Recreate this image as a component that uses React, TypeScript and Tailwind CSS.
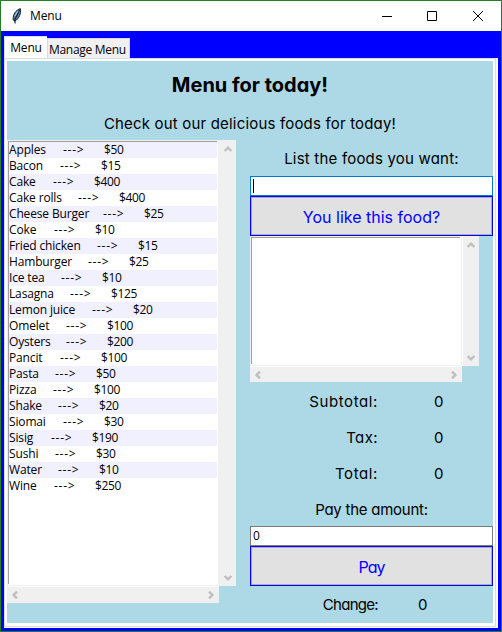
import React from "react";

const foods: [string, number, number][] = [
  ["Apples", 50, 104],
  ["Bacon", 15, 101],
  ["Cake", 400, 94],
  ["Cake rolls", 400, 119],
  ["Cheese Burger", 25, 144],
  ["Coke", 10, 95],
  ["Fried chicken", 15, 138],
  ["Hamburger", 25, 129],
  ["Ice tea", 10, 102],
  ["Lasagna", 125, 111],
  ["Lemon juice", 20, 133],
  ["Omelet", 100, 107],
  ["Oysters", 200, 107],
  ["Pancit", 100, 101],
  ["Pasta", 50, 96],
  ["Pizza", 100, 94],
  ["Shake", 20, 99],
  ["Siomai", 30, 104],
  ["Sisig", 190, 92],
  ["Sushi", 30, 96],
  ["Water", 10, 99],
  ["Wine", 250, 95],
];

const ui = "font-['Segoe_UI','Open_Sans',sans-serif]";
const comic =
  "font-['Comic_Sans_MS','Inter',sans-serif] [font-feature-settings:'cv11'] whitespace-nowrap";

function Chevron({ turn }: { turn: string }) {
  return (
    <svg className={`block shrink-0 ${turn}`} width="8" height="8" viewBox="0 0 8 8">
      <path d="M.6 6L4 2.6L7.4 6" fill="none" stroke="#bfbfbf" strokeWidth="2.4" />
    </svg>
  );
}

function ListFrame({ tall, children }: { tall: boolean; children?: React.ReactNode }) {
  return (
    <div className="w-[229px]">
      <div className={`flex ${tall ? "h-[446px]" : "h-[130px]"}`}>
        <div className="w-[212px] border border-[#f0f0f0] bg-white">
          <div className="mr-px h-[calc(100%-1px)] overflow-hidden border-t border-l border-[#a0a0a0]">
            {children}
          </div>
        </div>
        <div className={`w-px ${tall ? "bg-[#f0f0f0]" : "bg-white"}`} />
        <div className="flex w-4 flex-col items-center justify-between bg-[#f0f0f0] pt-[5px] pb-1">
          <Chevron turn="rotate-0" />
          <Chevron turn="rotate-180" />
        </div>
      </div>
      <div className="h-px w-[212px] bg-white" />
      <div className={`flex w-[212px] items-center justify-between bg-[#f0f0f0] px-1 ${tall ? "h-4" : "h-[15px]"}`}>
        <Chevron turn="-rotate-90" />
        <Chevron turn="rotate-90" />
      </div>
    </div>
  );
}

function Amount({ label, value, gap, track }: { label: string; value: string; gap: string; track: string }) {
  return (
    <div className={`flex h-9 items-center pt-[3px] text-[15px] ${comic}`}>
      <div className={`w-32 text-right ${track}`}>{label}</div>
      <div className={gap}>{value}</div>
    </div>
  );
}

export default function App() {
  return (
    <div className={`flex h-[632px] w-[502px] flex-col border border-[#228022] bg-[#0000ff] text-black ${ui}`}>
      <div className="flex h-[30px] shrink-0 items-center bg-white text-[12px]">
        <svg className="ml-[11px]" width="10" height="16" viewBox="0 0 10 16">
          <path d="M8.4.7C4 1.7.7 6.3 1.2 12L3 13C7.2 10.5 9.2 5.5 8.4.7Z" fill="#4f86bd" stroke="#18202b" />
          <path d="M7.5 2L2.7 12M3 12V15.5" fill="none" stroke="#111" strokeWidth="1.1" />
          <path d="M6 3L3 8" stroke="#b9d7ef" />
        </svg>
        <span className="ml-[8px] tracking-[-0.1px]">Menu</span>
        <svg className="mr-[18px] mb-px ml-auto" width="101" height="10" viewBox="0 0 101 10" fill="none" stroke="#000">
          <path d="M0 5.5H10M45.5.5H54.5V9.5H45.5ZM91 0L101 10M101 0L91 10" />
        </svg>
      </div>

      <div className="flex h-[27px] shrink-0 items-end pl-[3px] text-[12px]">
        <div className="flex h-[22px] w-[43px] items-center justify-center border-t border-l border-[#dcdcdc] bg-white tracking-[-0.15px]">
          Menu
        </div>
        <div className="flex h-5 w-[83px] items-center border border-b-0 border-[#d9d9d9] bg-[#f0f0f0] pt-[2px] pl-px tracking-[-0.3px] whitespace-nowrap">
          Manage Menu
        </div>
      </div>

      <div className="ml-[3px] h-[570px] w-[494px] shrink-0 bg-[#f9f9f9]">
        <div className="h-[569px] w-[492px] border border-[#dcdcdc] bg-white pt-[2px] pl-[2px]">
          <div className="flex h-[562px] w-[486px] flex-col bg-[#add8e6]">
            <h1 className={`flex h-[45px] items-center justify-center pt-[2px] text-[20px] font-bold ${comic}`}>
              Menu for today!
            </h1>
            <p className={`flex h-[34px] items-center justify-center pt-[2px] text-[15px] tracking-[0.18px] ${comic}`}>
              Check out our delicious foods for today!
            </p>
            <div className="flex">
              <ListFrame tall>
                {foods.map(([name, price, x], i) => (
                  <div
                    key={name}
                    className={`flex h-4 text-[12px] leading-4 whitespace-nowrap ${i % 2 ? "bg-white" : "bg-[#f0f0ff]"}`}
                  >
                    <span className="shrink-0 tracking-[-0.15px]" style={{ width: x - 50 }}>{name}</span>
                    <span className="w-[41px] shrink-0 tracking-[0.75px]">---&gt;</span>
                    <span className="tracking-[-0.4px]">${price}</span>
                  </div>
                ))}
              </ListFrame>
              <div className="ml-[14px] w-[243px]">
                <div className={`flex h-9 items-center justify-center pt-[3px] text-[15px] tracking-[0.2px] ${comic}`}>
                  List the foods you want:
                </div>
                <div className="flex h-5 items-center border border-[#0078d7] bg-white pl-[2px]">
                  <div className="h-[14px] w-px bg-black" />
                </div>
                <button className={`block h-10 w-full border border-[#0000ff] bg-[#e1e1e1] pt-[2px] text-[16px] text-[#0000ff] shadow-[inset_0_0_0_1px_#adadad] ${comic}`}>
                  You like this food?
                </button>
                <ListFrame tall={false} />
                <div className="h-px" />
                <Amount label="Subtotal:" value="0" gap="ml-14" track="tracking-[0.6px]" />
                <Amount label="Tax:" value="0" gap="ml-14" track="tracking-[0.4px]" />
                <Amount label="Total:" value="0" gap="ml-14" track="tracking-[0.6px]" />
                <div className={`flex h-[35px] items-center justify-center pt-[3px] text-[15px] tracking-[-0.25px] ${comic}`}>
                  Pay the amount:
                </div>
                <div className="flex h-5 items-center border border-[#7a7a7a] bg-white pl-[2px] text-[12px]">0</div>
                <button className={`block h-10 w-full border border-[#0000ff] bg-[#e1e1e1] pt-[2px] text-[16px] tracking-[-1px] text-[#0000ff] shadow-[inset_0_0_0_1px_#adadad] ${comic}`}>
                  Pay
                </button>
                <Amount label="Change:" value="0" gap="ml-10" track="tracking-[-0.7px]" />
              </div>
            </div>
          </div>
        </div>
      </div>
    </div>
  );
}
